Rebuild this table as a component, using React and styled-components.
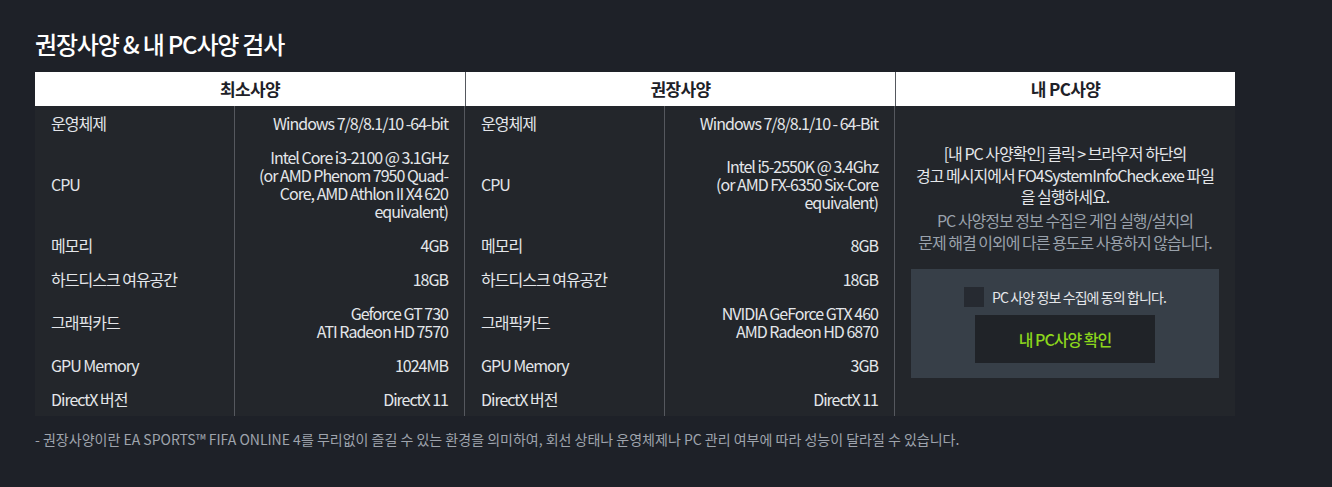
import React from "react";
import styled, { createGlobalStyle } from "styled-components";

const Global = createGlobalStyle`
  html, body { margin: 0; padding: 0; background: #1e2128; }
  body { font-family: "Noto Sans CJK KR", "Noto Sans", sans-serif; }
`;

const Page = styled.div`
  padding: 26px 35px 0;
  width: 1200px;
`;

const Title = styled.h2`
  margin: 0 0 10px;
  font-size: 24px;
  line-height: 36px;
  font-weight: 500;
  color: #ffffff;
  letter-spacing: -1.2px;
`;

const Table = styled.div`
  display: grid;
  grid-template-columns: 200px 230px 200px 230px 340px;
  grid-template-rows: 34px;
  grid-auto-rows: auto;
  background: #23262b;
  letter-spacing: -1px;
`;

const Head = styled.div`
  grid-column: ${(p) => p.$span};
  background: #ffffff;
  color: #1e2128;
  font-size: 17px;
  font-weight: 700;
  line-height: 34px;
  letter-spacing: -0.6px;
  text-align: center;
  border-left: ${(p) => (p.$first ? "none" : "1px solid #55585e")};
`;

const Cell = styled.div`
  display: flex;
  align-items: center;
  justify-content: ${(p) => (p.$value ? "flex-end" : "flex-start")};
  text-align: ${(p) => (p.$value ? "right" : "left")};
  padding: 8px 16px;
  font-size: 16px;
  line-height: 18px;
  color: #e4e6ea;
  border-right: 1px solid #55585e;
`;

const MyPc = styled.div`
  grid-column: 5;
  grid-row: 2 / span 7;
  padding: 37px 16px 0;
  display: flex;
  flex-direction: column;
`;

const Desc = styled.p`
  margin: ${(p) => (p.$muted ? "1px 0 0" : "0")};
  font-size: 16px;
  line-height: ${(p) => (p.$muted ? "22px" : "21.5px")};
  text-align: center;
  color: ${(p) => (p.$muted ? "#9aa2ac" : "#e4e6ea")};
`;

const AgreeBox = styled.div`
  margin-top: 16px;
  background: #373f48;
  height: 109px;
  display: flex;
  flex-direction: column;
  align-items: center;
  padding-top: 18px;
  box-sizing: border-box;
`;

const AgreeLabel = styled.label`
  display: flex;
  align-items: center;
  gap: 8px;
  font-size: 14px;
  line-height: 20px;
  color: #e4e6ea;
  letter-spacing: -0.9px;
`;

const Check = styled.span`
  width: 20px;
  height: 20px;
  background: #262a31;
  display: inline-block;
`;

const CheckButton = styled.button`
  margin-top: 8px;
  width: 180px;
  height: 48px;
  border: none;
  background: #202328;
  color: #8cd61c;
  font-family: inherit;
  font-size: 16px;
  font-weight: 500;
  letter-spacing: -1px;
  cursor: pointer;
`;

const Note = styled.p`
  margin: 13px 0 0;
  font-size: 14px;
  line-height: 20px;
  color: #9fa4ad;
  letter-spacing: 0;
`;

const rows = [
  { label: "운영체제", min: ["Windows 7/8/8.1/10 -64-bit"], rec: ["Windows 7/8/8.1/10 - 64-Bit"] },
  {
    label: "CPU",
    min: ["Intel Core i3-2100 @ 3.1GHz", "(or AMD Phenom 7950 Quad-", "Core, AMD Athlon II X4 620", "equivalent)"],
    rec: ["Intel i5-2550K @ 3.4Ghz", "(or AMD FX-6350 Six-Core", "equivalent)"],
  },
  { label: "메모리", min: ["4GB"], rec: ["8GB"] },
  { label: "하드디스크 여유공간", min: ["18GB"], rec: ["18GB"] },
  { label: "그래픽카드", min: ["Geforce GT 730", "ATI Radeon HD 7570"], rec: ["NVIDIA GeForce GTX 460", "AMD Radeon HD 6870"] },
  { label: "GPU Memory", min: ["1024MB"], rec: ["3GB"] },
  { label: "DirectX 버전", min: ["DirectX 11"], rec: ["DirectX 11"] },
];

const Lines = ({ lines }) => (
  <div>
    {lines.map((l, i) => (
      <React.Fragment key={i}>
        {i > 0 && <br />}
        {l}
      </React.Fragment>
    ))}
  </div>
);

export default function App() {
  return (
    <>
      <Global />
      <Page>
        <Title>권장사양 &amp; 내 PC사양 검사</Title>
        <Table>
          <Head $span="1 / span 2" $first>최소사양</Head>
          <Head $span="3 / span 2">권장사양</Head>
          <Head $span="5">내 PC사양</Head>
          {rows.map((r) => (
            <React.Fragment key={r.label}>
              <Cell>{r.label}</Cell>
              <Cell $value><Lines lines={r.min} /></Cell>
              <Cell>{r.label}</Cell>
              <Cell $value><Lines lines={r.rec} /></Cell>
            </React.Fragment>
          ))}
          <MyPc>
            <Desc>
              [내 PC 사양확인] 클릭 &gt; 브라우저 하단의<br />
              경고 메시지에서 FO4SystemInfoCheck.exe 파일<br />
              을 실행하세요.
            </Desc>
            <Desc $muted>
              PC 사양정보 정보 수집은 게임 실행/설치의<br />
              문제 해결 이외에 다른 용도로 사용하지 않습니다.
            </Desc>
            <AgreeBox>
              <AgreeLabel>
                <Check />
                PC 사양 정보 수집에 동의 합니다.
              </AgreeLabel>
              <CheckButton>내 PC사양 확인</CheckButton>
            </AgreeBox>
          </MyPc>
        </Table>
        <Note>- 권장사양이란 EA SPORTS™ FIFA ONLINE 4를 무리없이 즐길 수 있는 환경을 의미하여, 회선 상태나 운영체제나 PC 관리 여부에 따라 성능이 달라질 수 있습니다.</Note>
      </Page>
    </>
  );
}
